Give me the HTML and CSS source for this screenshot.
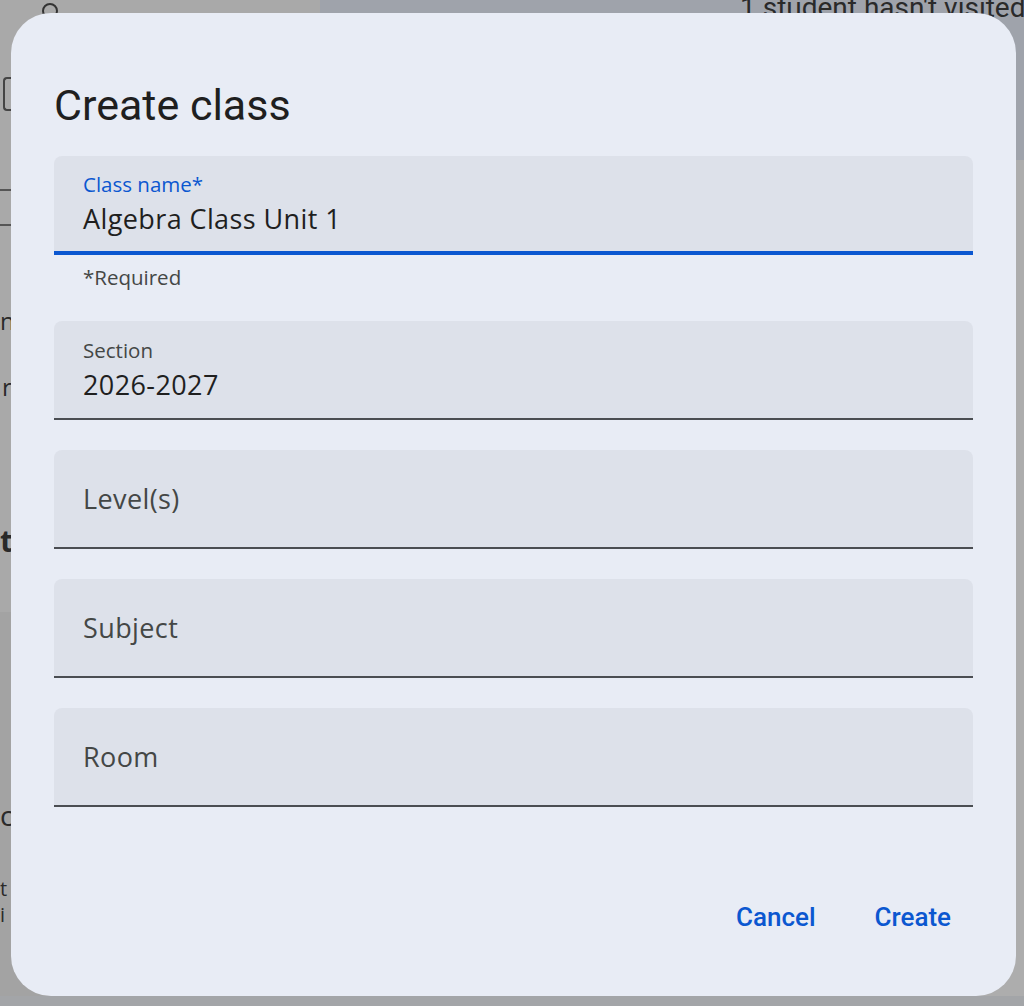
FILE: index.html
```html
<!DOCTYPE html>
<html lang="en">
<head>
    <meta charset="UTF-8">
    <meta name="viewport" content="width=device-width, initial-scale=1.0">
    <title>Create class</title>
    <link rel="stylesheet" href="styles.css">
</head>
<body>
    <div class="page">
        <div class="page-left">
            <div class="left-upper">
                <div class="search-ring"></div>
                <div class="nav-icon"></div>
                <div class="nav-line"></div>
                <div class="nav-line"></div>
                <p class="frag frag-m">n</p>
                <p class="frag frag-r">r</p>
                <p class="frag frag-big">t</p>
            </div>
            <div class="left-lower">
                <p class="frag frag-c">c</p>
                <p class="frag frag-s frag-to">t</p>
                <p class="frag frag-s">i</p>
            </div>
        </div>
        <div class="page-main">
            <div class="banner">
                <span class="banner-text">1 student hasn't visited</span>
            </div>
        </div>
        <div class="page-side">
            <div class="side-top"></div>
            <p class="side-frag side-bold">n</p>
            <p class="side-frag">c</p>
            <p class="side-frag side-small">A</p>
            <p class="side-frag side-small">r</p>
            <p class="side-frag side-small">c</p>
            <p class="side-frag side-small"><a href="#">L</a></p>
        </div>
    </div>

    <div class="dialog">
        <h1>Create class</h1>

        <div class="field focused">
            <label>Class name*</label>
            <div class="value">Algebra Class Unit 1</div>
        </div>
        <div class="helper">*Required</div>

        <div class="field">
            <label>Section</label>
            <div class="value">2026-2027</div>
        </div>

        <div class="field">
            <div class="placeholder">Level(s)</div>
        </div>

        <div class="field">
            <div class="placeholder">Subject</div>
        </div>

        <div class="field">
            <div class="placeholder">Room</div>
        </div>

        <div class="actions">
            <button>Cancel</button>
            <button>Create</button>
        </div>
    </div>
</body>
</html>
```

FILE: styles.css
```css
* {
    margin: 0;
    padding: 0;
    box-sizing: border-box;
    font-family: 'Open Sans', 'Liberation Sans', Arial, sans-serif;
}

body {
    background: #a3a5a8;
    overflow: hidden;
    height: 100vh;
}

/* dimmed page behind the dialog */
.page {
    display: grid;
    grid-template-columns: 320px 1fr 8px;
    height: 996px;
    color: #2a2a2a;
}

.page-left {
    overflow: hidden;
}

.left-upper {
    background: #a9a9a9;
    height: 612px;
    padding-top: 1px;
}

.search-ring {
    width: 16px;
    height: 16px;
    border: 2px solid #333;
    border-radius: 50%;
    margin: 2px 0 0 42px;
}

.nav-icon {
    width: 8px;
    height: 34px;
    border: 2px solid #444;
    border-right: none;
    border-radius: 4px 0 0 4px;
    margin: 58px 0 0 3px;
}

.nav-line {
    height: 2px;
    background: #555;
    width: 60px;
    margin-top: 78px;
}

.nav-line + .nav-line {
    margin-top: 33px;
}

.frag {
    font-size: 24px;
    line-height: 30px;
    width: 11px;
    overflow: hidden;
}

.frag-m {
    margin-top: 80px;
}

.frag-r {
    margin-top: 36px;
    padding-left: 2px;
}

.frag-big {
    font-size: 30px;
    font-weight: 700;
    margin-top: 124px;
}

.left-lower {
    background: #a3a3a3;
    height: 384px;
    padding-top: 186px;
}

.left-lower .frag-c {
    font-size: 28px;
    line-height: 34px;
}

.left-lower .frag-s {
    font-size: 20px;
    line-height: 26px;
}

.left-lower .frag-to {
    margin-top: 44px;
}

.page-main {
    background: #adadad;
}

.banner {
    background: #9fa3ab;
    height: 160px;
    padding-left: 420px;
    overflow: hidden;
}

.banner-text {
    display: block;
    font-family: Roboto, 'Liberation Sans', Arial, sans-serif;
    font-size: 28px;
    line-height: 24px;
    margin-top: -4px;
    white-space: nowrap;
}

.page-side {
    background: #adadad;
    overflow: hidden;
}

.side-top {
    background: #9fa3ab;
    height: 160px;
    margin-bottom: 600px;
}

.side-frag {
    font-size: 22px;
    line-height: 34px;
    padding-left: 2px;
}

.side-bold {
    font-weight: 700;
}

.side-small {
    font-size: 18px;
}

.side-frag a {
    color: #0b57d0;
}

/* dialog */
.dialog {
    position: fixed;
    left: 11px;
    top: 13px;
    width: 1005px;
    height: 983px;
    background: #e8ecf5;
    border-radius: 40px;
    padding: 66px 43px 0 43px;
    display: flex;
    flex-direction: column;
}

h1 {
    font-family: Roboto, 'Liberation Sans', Arial, sans-serif;
    font-size: 43px;
    line-height: 52px;
    font-weight: 400;
    color: #1f1f1f;
    margin-bottom: 25px;
}

.field {
    height: 99px;
    flex-shrink: 0;
    background: #dde1ea;
    border-radius: 8px 8px 0 0;
    border-bottom: 2px solid #4a4d52;
    padding: 0 29px;
    display: flex;
    flex-direction: column;
    justify-content: center;
    margin-bottom: 30px;
}

.field.focused {
    border-bottom: 4px solid #0b57d0;
    margin-bottom: 0;
}

.field label {
    font-size: 20.5px;
    line-height: 28px;
    color: #444746;
}

.field.focused label {
    color: #0b57d0;
}

.value {
    font-size: 27px;
    letter-spacing: 0.4px;
    line-height: 36px;
    color: #1f1f1f;
    margin-top: 3px;
}

.placeholder {
    font-size: 27px;
    letter-spacing: 0.4px;
    line-height: 36px;
    color: #444746;
}

.helper {
    font-size: 20.5px;
    line-height: 24px;
    color: #444746;
    padding: 10px 29px 0;
    height: 66px;
    flex-shrink: 0;
}

.actions {
    display: flex;
    justify-content: flex-end;
    gap: 15px;
    margin-top: 56px;
}

.actions button {
    background: none;
    border: none;
    font-family: Roboto, 'Liberation Sans', Arial, sans-serif;
    font-size: 26px;
    font-weight: 500;
    line-height: 48px;
    color: #0b57d0;
    padding: 0 22px;
    cursor: pointer;
}
```
